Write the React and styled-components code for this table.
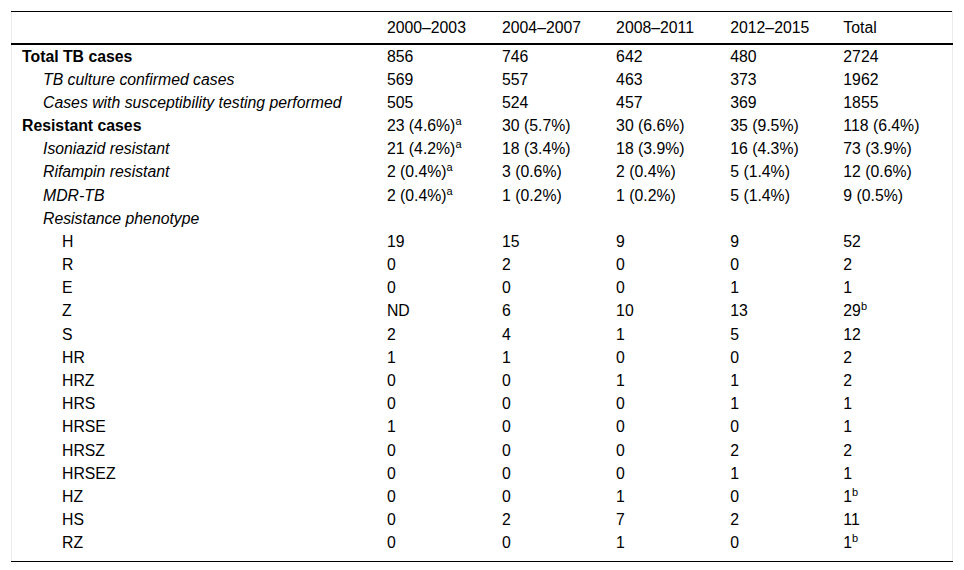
import React from 'react'
import styled, { createGlobalStyle } from 'styled-components'

const Global = createGlobalStyle`
  html, body {
    margin: 0;
    padding: 0;
    background: #fff;
  }
  body {
    font-family: "Liberation Sans", Arial, sans-serif;
    color: #000;
  }
`

const Page = styled.div`
  padding: 11px 11px 0 11px;
`

const Table = styled.table`
  width: 942px;
  border-collapse: collapse;
  font-size: 15.8px;
  border-left: 1px solid #ececec;
  border-right: 1px solid #ececec;
  border-top: 1px solid #000;
  border-bottom: 1px solid #000;
  table-layout: fixed;
`

const Head = styled.thead`
  tr {
    height: 32px;
    border-bottom: 2px solid #000;
  }
`

const Th = styled.th`
  font-weight: normal;
  text-align: left;
  padding: 1px 0 0 10px;
  vertical-align: middle;
`

const Row = styled.tr`
  height: 23.2px;
`

const Body = styled.tbody`
  tr:last-child td {
    padding-bottom: 7px;
  }
`

const indents = [10, 31, 50]

const Label = styled.td`
  padding: 0 0 0 ${p => indents[p.$indent]}px;
  font-weight: ${p => (p.$bold ? 'bold' : 'normal')};
  font-style: ${p => (p.$italic ? 'italic' : 'normal')};
  white-space: nowrap;
  line-height: 23px;
`

const Cell = styled.td`
  padding: 0 0 0 10px;
  white-space: nowrap;
  line-height: 23px;
`

const Sup = styled.sup`
  font-size: 11px;
  line-height: 0;
  vertical-align: 6px;
`

const cols = ['2000–2003', '2004–2007', '2008–2011', '2012–2015', 'Total']

const rows = [
  { label: 'Total TB cases', bold: true, indent: 0, v: ['856', '746', '642', '480', '2724'] },
  { label: 'TB culture confirmed cases', italic: true, indent: 1, v: ['569', '557', '463', '373', '1962'] },
  { label: 'Cases with susceptibility testing performed', italic: true, indent: 1, v: ['505', '524', '457', '369', '1855'] },
  { label: 'Resistant cases', bold: true, indent: 0, v: [['23 (4.6%)', 'a'], '30 (5.7%)', '30 (6.6%)', '35 (9.5%)', '118 (6.4%)'] },
  { label: 'Isoniazid resistant', italic: true, indent: 1, v: [['21 (4.2%)', 'a'], '18 (3.4%)', '18 (3.9%)', '16 (4.3%)', '73 (3.9%)'] },
  { label: 'Rifampin resistant', italic: true, indent: 1, v: [['2 (0.4%)', 'a'], '3 (0.6%)', '2 (0.4%)', '5 (1.4%)', '12 (0.6%)'] },
  { label: 'MDR-TB', italic: true, indent: 1, v: [['2 (0.4%)', 'a'], '1 (0.2%)', '1 (0.2%)', '5 (1.4%)', '9 (0.5%)'] },
  { label: 'Resistance phenotype', italic: true, indent: 1, v: ['', '', '', '', ''] },
  { label: 'H', indent: 2, v: ['19', '15', '9', '9', '52'] },
  { label: 'R', indent: 2, v: ['0', '2', '0', '0', '2'] },
  { label: 'E', indent: 2, v: ['0', '0', '0', '1', '1'] },
  { label: 'Z', indent: 2, v: ['ND', '6', '10', '13', ['29', 'b']] },
  { label: 'S', indent: 2, v: ['2', '4', '1', '5', '12'] },
  { label: 'HR', indent: 2, v: ['1', '1', '0', '0', '2'] },
  { label: 'HRZ', indent: 2, v: ['0', '0', '1', '1', '2'] },
  { label: 'HRS', indent: 2, v: ['0', '0', '0', '1', '1'] },
  { label: 'HRSE', indent: 2, v: ['1', '0', '0', '0', '1'] },
  { label: 'HRSZ', indent: 2, v: ['0', '0', '0', '2', '2'] },
  { label: 'HRSEZ', indent: 2, v: ['0', '0', '0', '1', '1'] },
  { label: 'HZ', indent: 2, v: ['0', '0', '1', '0', ['1', 'b']] },
  { label: 'HS', indent: 2, v: ['0', '2', '7', '2', '11'] },
  { label: 'RZ', indent: 2, v: ['0', '0', '1', '0', ['1', 'b']] },
]

const widths = [365, 115, 114, 114, 113, 119]

const Value = ({ v }) =>
  Array.isArray(v) ? <>{v[0]}<Sup>{v[1]}</Sup></> : v

export default function App() {
  return <Page>
    <Global />
    <Table>
      <colgroup>
        {widths.map((w, i) => <col key={i} style={{ width: w }} />)}
      </colgroup>
      <Head>
        <tr>
          <Th />
          {cols.map(c => <Th key={c}>{c}</Th>)}
        </tr>
      </Head>
      <Body>
        {rows.map(r => (
          <Row key={r.label}>
            <Label $bold={r.bold} $italic={r.italic} $indent={r.indent}>{r.label}</Label>
            {r.v.map((v, i) => <Cell key={i}><Value v={v} /></Cell>)}
          </Row>
        ))}
      </Body>
    </Table>
  </Page>
}
